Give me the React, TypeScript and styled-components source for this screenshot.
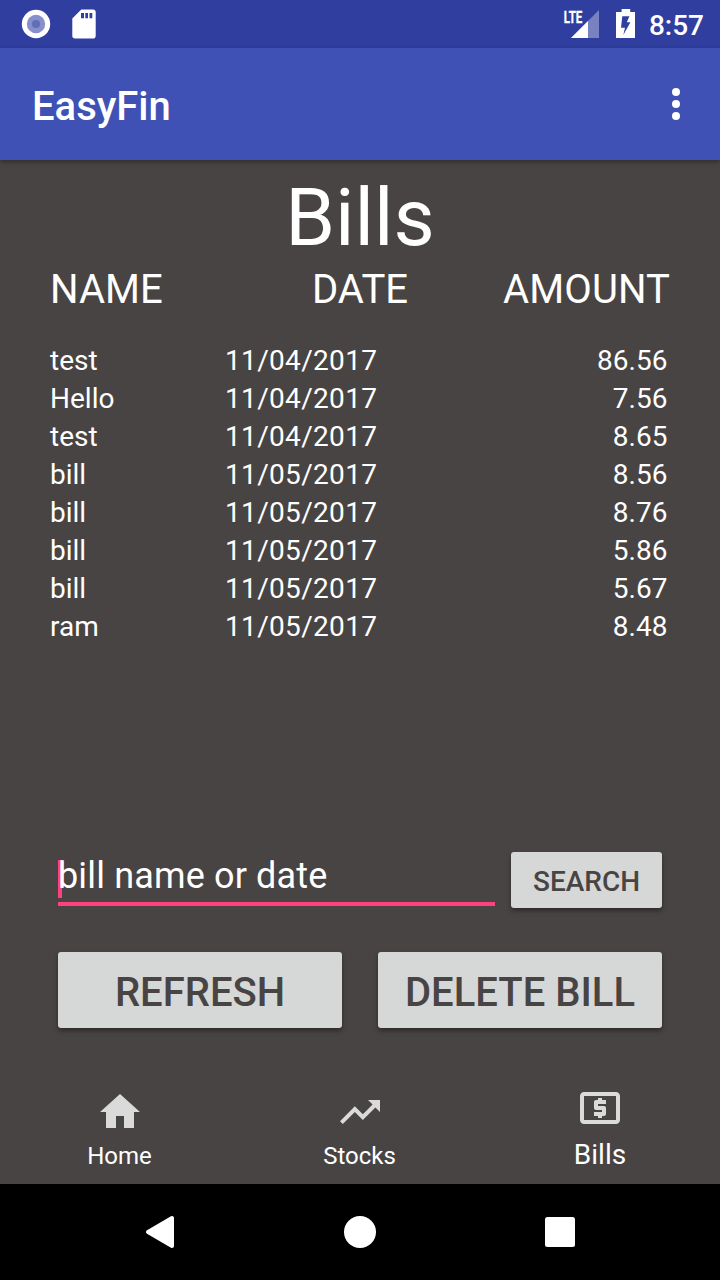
import React from "react";
import styled, { createGlobalStyle } from "styled-components";

const GlobalStyle = createGlobalStyle`
  * { box-sizing: border-box; }
  body { margin: 0; background: #484443; }
`;

const Screen = styled.div`
  width: 720px;
  height: 1280px;
  display: flex;
  flex-direction: column;
  overflow: hidden;
  background: #484443;
  color: #fff;
  font-family: Roboto, "Liberation Sans", sans-serif;
`;

const StatusBar = styled.header`
  flex: none;
  height: 48px;
  display: flex;
  align-items: center;
  justify-content: space-between;
  padding: 0 16px 0 16px;
  background: #303f9f;
`;

const StatusGroup = styled.div`
  display: flex;
  align-items: center;
  height: 48px;
`;

const Clock = styled.span`
  margin-left: 7px;
  padding-top: 3px;
  font-size: 28px;
  line-height: 32px;
  font-weight: 500;
`;

const AppBar = styled.div`
  flex: none;
  height: 112px;
  display: flex;
  align-items: center;
  justify-content: space-between;
  padding: 0 32px;
  background: #3f51b5;
  box-shadow: 0 2px 5px rgba(0, 0, 0, 0.35);
`;

const AppTitle = styled.h1`
  margin: 0;
  padding-top: 6px;
  font-size: 40px;
  line-height: 46px;
  font-weight: 500;
`;

const MenuButton = styled.button`
  width: 24px;
  height: 48px;
  padding: 0;
  border: 0;
  background: none;
  display: flex;
  svg { display: block; }
`;

const Content = styled.main`
  flex: 1;
  display: flex;
  flex-direction: column;
  padding: 11px 50px 0;
`;

const PageTitle = styled.h2`
  margin: 0 0 2px;
  font-size: 80px;
  line-height: 94px;
  font-weight: 400;
  text-align: center;
`;

const TableHead = styled.div`
  display: flex;
  justify-content: space-between;
  margin-bottom: 29px;
  font-size: 40px;
  line-height: 46px;
`;

const HeadCell = styled.span<{ $align: string }>`
  flex: 1;
  text-align: ${(p) => p.$align};
  letter-spacing: ${(p) => (p.$align === "right" ? "0.12px" : "normal")};
`;

const BillRow = styled.div`
  display: grid;
  grid-template-columns: 175px 1fr 160px;
  padding-right: 2.6px;
  height: 38px;
  font-size: 28px;
  line-height: 38px;
`;

const BillDate = styled.span`
  letter-spacing: 0.33px;
`;

const Amount = styled.span`
  text-align: right;
`;

const Controls = styled.section`
  margin-top: auto;
  padding: 0 8px;
`;

const SearchRow = styled.div`
  display: flex;
  gap: 16px;
  height: 56px;
  margin-bottom: 44px;
`;

const SearchField = styled.div`
  flex: 1;
  height: 54px;
  display: flex;
  align-items: flex-start;
  padding-top: 3px;
  border-bottom: 4px solid #ff4081;
  font-size: 36px;
  line-height: 42px;
  letter-spacing: 0.15px;
`;

const Caret = styled.span`
  width: 4px;
  height: 38px;
  margin: 5px -4px 0 0;
  background: #ff4081;
`;

const Placeholder = styled.span`
  position: relative;
`;

const Button = styled.button<{ $large?: boolean }>`
  ${(p) => (p.$large ? "flex: 1; height: 76px;" : "width: 151px; height: 56px;")}
  padding: ${(p) => (p.$large ? "4px 0 0" : "3px 0 0")};
  border: 0;
  border-radius: 3px;
  background: #d6d7d7;
  color: #484443;
  font-family: inherit;
  font-size: ${(p) => (p.$large ? 40 : 28)}px;
  font-weight: 500;
  white-space: nowrap;
  box-shadow: 0 3px 5px rgba(0, 0, 0, 0.38);
`;

const ButtonRow = styled.div`
  display: flex;
  gap: 36px;
`;

const Tabs = styled.nav`
  flex: none;
  display: flex;
  height: 112px;
  margin-top: 44px;
`;

const Tab = styled.div<{ $active?: boolean }>`
  flex: 1;
  display: flex;
  flex-direction: column;
  align-items: center;
  gap: ${(p) => (p.$active ? 7 : 6)}px;
  padding-top: ${(p) => (p.$active ? 12 : 16)}px;
  font-size: ${(p) => (p.$active ? 28 : 24)}px;
  line-height: ${(p) => (p.$active ? 32 : 28)}px;
  svg { display: block; }
`;

const TabLabel = styled.span<{ $active?: boolean }>`
  margin-right: ${(p) => (p.$active ? 0 : 1)}px;
`;

const SystemNav = styled.footer`
  flex: none;
  height: 96px;
  display: flex;
  align-items: center;
  justify-content: center;
  gap: 152px;
  background: #000;
  svg { display: block; }
`;

const bills = [
  ["test", "11/04/2017", "86.56"],
  ["Hello", "11/04/2017", "7.56"],
  ["test", "11/04/2017", "8.65"],
  ["bill", "11/05/2017", "8.56"],
  ["bill", "11/05/2017", "8.76"],
  ["bill", "11/05/2017", "5.86"],
  ["bill", "11/05/2017", "5.67"],
  ["ram", "11/05/2017", "8.48"],
];

const tabs = [
  { label: "Home", path: "M10 20v-6h4v6h5v-8h3L12 3 2 12h3v8z" },
  {
    label: "Stocks",
    path: "M16 6l2.29 2.29-4.88 4.88-4-4L2 16.59 3.41 18l6-6 4 4 6.3-6.29L22 12V6z",
  },
  {
    label: "Bills",
    active: true,
    path: "M11 17h2v-1h1c.55 0 1-.45 1-1v-3c0-.55-.45-1-1-1h-3v-1h4V8h-2V7h-2v1h-1c-.55 0-1 .45-1 1v3c0 .55.45 1 1 1h3v1H9v2h2v1zm9-13H4c-1.11 0-1.99.89-1.99 2L2 18c0 1.11.89 2 2 2h16c1.11 0 2-.89 2-2V6c0-1.11-.89-2-2-2zm0 14H4V6h16v12z",
  },
];

function RecordIcon() {
  return (
    <svg width="40" height="48" viewBox="0 0 40 48">
      <circle cx="20" cy="24" r="14.2" fill="#fff" />
      <circle cx="20" cy="24" r="9.2" fill="#8790ca" />
      <circle cx="20" cy="24" r="4.1" fill="#626eb8" />
    </svg>
  );
}

function SdCardIcon() {
  return (
    <svg width="56" height="48" viewBox="0 0 56 48">
      <path
        fill="#fff"
        fillRule="evenodd"
        d="M25.3 9.5H36.9a2.8 2.8 0 0 1 2.8 2.8v23.4a2.8 2.8 0 0 1-2.8 2.8H19.1a2.8 2.8 0 0 1-2.8-2.8V18.4zM25 13v5.3H28V13zm4.3 0v5.3h2.7V13zm4.2 0v5.3h2.8V13z"
      />
    </svg>
  );
}

function SignalIcon() {
  return (
    <svg width="44" height="48" viewBox="0 0 44 48">
      <path fill="#fff" fillOpacity=".35" d="M39 10v28H11z" />
      <path fill="#fff" d="M28 21v17H11z" />
      <text
        x="3.7"
        y="22.5"
        fill="#fff"
        stroke="#fff"
        strokeWidth=".3"
        fontSize="17.3"
        fontWeight="700"
        textLength="18.6"
        lengthAdjust="spacingAndGlyphs"
      >
        LTE
      </text>
    </svg>
  );
}

function BatteryIcon() {
  return (
    <svg width="38" height="48" viewBox="0 0 38 48">
      <path
        fill="#fff"
        fillRule="evenodd"
        d="M17.6 9h8.6v3H31v26H12V12h5.6zM18.3 16.3L17 27.7H21L19.3 35L26.4 22.2H22.8L25.4 16.3z"
      />
    </svg>
  );
}

export default function App() {
  return (
    <Screen>
      <GlobalStyle />
      <StatusBar>
        <StatusGroup>
          <RecordIcon />
          <SdCardIcon />
        </StatusGroup>
        <StatusGroup>
          <SignalIcon />
          <BatteryIcon />
          <Clock>8:57</Clock>
        </StatusGroup>
      </StatusBar>
      <AppBar>
        <AppTitle>EasyFin</AppTitle>
        <MenuButton aria-label="More options">
          <svg width="24" height="48" viewBox="0 0 24 48" fill="#fff">
            <circle cx="12" cy="12" r="4" />
            <circle cx="12" cy="24" r="4" />
            <circle cx="12" cy="36" r="4" />
          </svg>
        </MenuButton>
      </AppBar>
      <Content>
        <PageTitle>Bills</PageTitle>
        <TableHead>
          <HeadCell $align="left">NAME</HeadCell>
          <HeadCell $align="center">DATE</HeadCell>
          <HeadCell $align="right">AMOUNT</HeadCell>
        </TableHead>
        {bills.map(([name, date, amount], i) => (
          <BillRow key={i}>
            <span>{name}</span>
            <BillDate>{date}</BillDate>
            <Amount>{amount}</Amount>
          </BillRow>
        ))}
        <Controls>
          <SearchRow>
            <SearchField>
              <Caret />
              <Placeholder>bill name or date</Placeholder>
            </SearchField>
            <Button>SEARCH</Button>
          </SearchRow>
          <ButtonRow>
            <Button $large>REFRESH</Button>
            <Button $large>DELETE BILL</Button>
          </ButtonRow>
        </Controls>
      </Content>
      <Tabs>
        {tabs.map((tab) => (
          <Tab key={tab.label} $active={tab.active}>
            <svg width="48" height="48" viewBox="0 0 24 24" fill="#dadada">
              <path d={tab.path} />
            </svg>
            <TabLabel $active={tab.active}>{tab.label}</TabLabel>
          </Tab>
        ))}
      </Tabs>
      <SystemNav>
        <svg width="48" height="48" viewBox="0 0 48 48">
          <path
            d="M12 24L36 10V38z"
            fill="#fff"
            stroke="#fff"
            strokeWidth="4"
            strokeLinejoin="round"
          />
        </svg>
        <svg width="48" height="48" viewBox="0 0 48 48">
          <circle cx="24" cy="24" r="16" fill="#fff" />
        </svg>
        <svg width="48" height="48" viewBox="0 0 48 48">
          <rect x="9" y="9" width="30" height="30" rx="2.5" fill="#fff" />
        </svg>
      </SystemNav>
    </Screen>
  );
}
